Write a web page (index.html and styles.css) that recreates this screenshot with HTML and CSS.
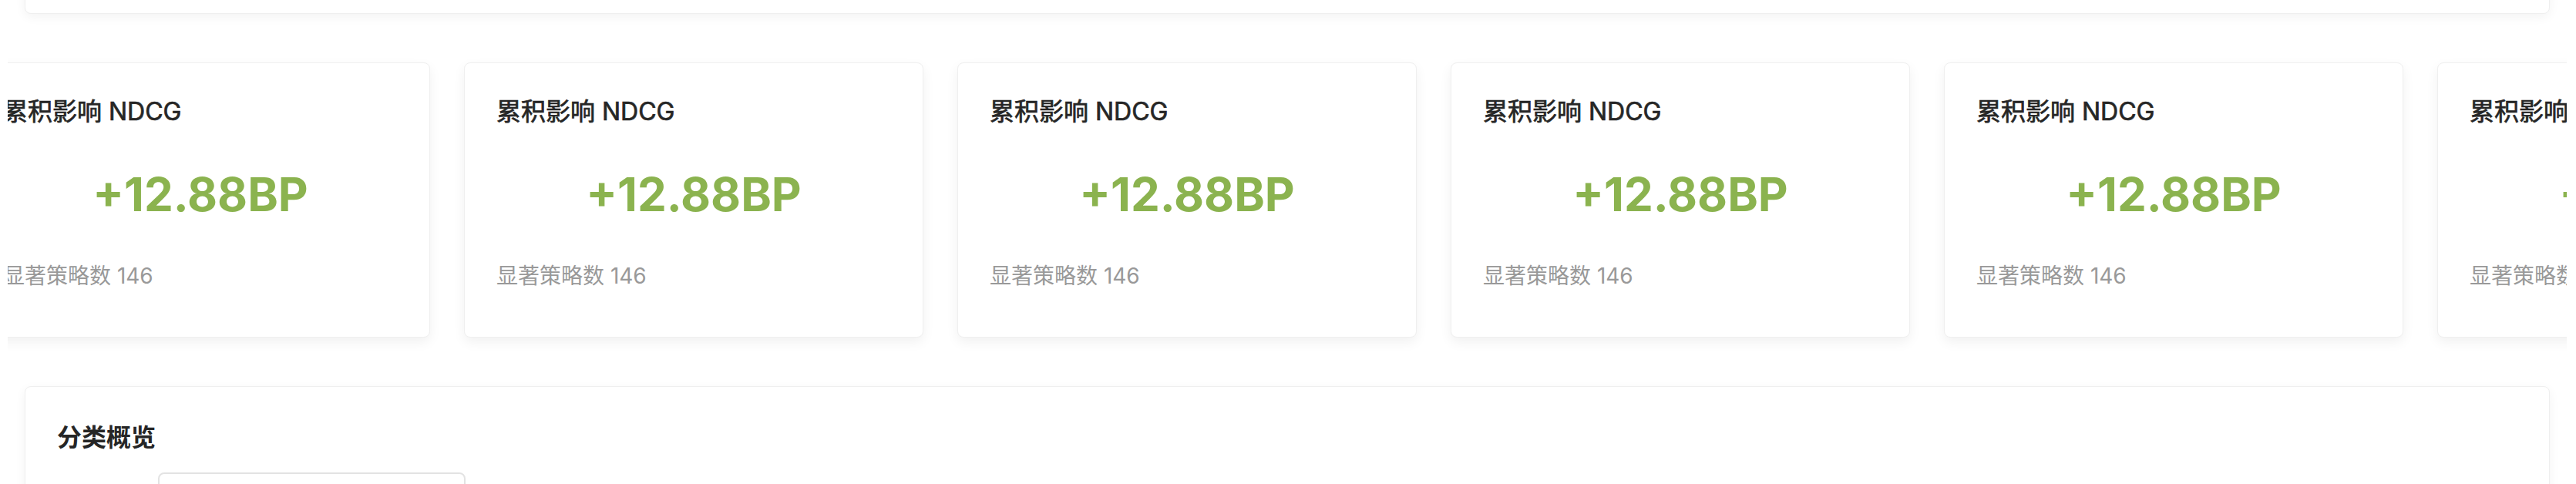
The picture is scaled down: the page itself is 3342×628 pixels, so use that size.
FILE: index.html
```html
<!DOCTYPE html>
<html lang="zh-CN">
<head>
<meta charset="utf-8">
<title>概览</title>
<link rel="stylesheet" href="styles.css">
</head>
<body>
<div class="page">
  <div class="panel top-panel"></div>

  <div class="scroller">
    <div class="track">
      <div class="metric-card">
        <div class="metric-title">累积影响 NDCG</div>
        <div class="metric-value">+12.88BP</div>
        <div class="metric-sub">显著策略数 146</div>
      </div>
      <div class="metric-card">
        <div class="metric-title">累积影响 NDCG</div>
        <div class="metric-value">+12.88BP</div>
        <div class="metric-sub">显著策略数 146</div>
      </div>
      <div class="metric-card">
        <div class="metric-title">累积影响 NDCG</div>
        <div class="metric-value">+12.88BP</div>
        <div class="metric-sub">显著策略数 146</div>
      </div>
      <div class="metric-card">
        <div class="metric-title">累积影响 NDCG</div>
        <div class="metric-value">+12.88BP</div>
        <div class="metric-sub">显著策略数 146</div>
      </div>
      <div class="metric-card">
        <div class="metric-title">累积影响 NDCG</div>
        <div class="metric-value">+12.88BP</div>
        <div class="metric-sub">显著策略数 146</div>
      </div>
      <div class="metric-card">
        <div class="metric-title">累积影响 NDCG</div>
        <div class="metric-value">+12.88BP</div>
        <div class="metric-sub">显著策略数 146</div>
      </div>
    </div>
  </div>

  <div class="panel overview-panel">
    <h3 class="panel-title">分类概览</h3>
    <div class="select-box"></div>
  </div>
</div>
</body>
</html>
```

FILE: styles.css
```css
html, body {
  margin: 0;
  padding: 0;
  background: #ffffff;
  height: 100%;
  overflow: hidden;
}

body {
  font-family: Inter, "Noto Sans CJK SC", sans-serif;
  color: #262626;
}

.page {
  display: flex;
  flex-direction: column;
}

.panel {
  background: #fff;
  border: 1px solid #efefef;
  border-radius: 8px;
  box-shadow: 0 4px 14px rgba(0, 0, 0, 0.05);
  box-sizing: border-box;
  margin-left: 32px;
  margin-right: 34px;
}

.top-panel {
  height: 60px;
  margin-top: -42px;
}

.scroller {
  margin-left: 10px;
  margin-right: 12px;
  overflow: hidden;
  padding-top: 63px;
  padding-bottom: 24px;
  margin-bottom: 39px;
}

.track {
  display: flex;
  gap: 44px;
  margin-left: -48px;
}

.metric-card {
  flex: 0 0 596px;
  height: 357px;
  box-sizing: border-box;
  background: #fff;
  border: 1px solid #efefef;
  border-radius: 8px;
  box-shadow: 0 6px 16px rgba(0, 0, 0, 0.06);
  padding: 47px 41px 0;
  display: flex;
  flex-direction: column;
}

.metric-title {
  font-size: 32px;
  line-height: 32px;
  font-weight: 400;
  -webkit-text-stroke: 0.7px #262626;
  color: #262626;
  white-space: nowrap;
}

.metric-value {
  margin-top: 63px;
  font-size: 60px;
  line-height: 56px;
  font-weight: 700;
  color: #8bb34f;
  text-align: center;
  white-space: nowrap;
}

.metric-sub {
  margin-top: 64px;
  font-size: 28px;
  line-height: 28px;
  color: #999999;
  white-space: nowrap;
}

.overview-panel {
  padding: 50px 41px 40px;
  min-height: 200px;
}

.panel-title {
  margin: 0;
  font-size: 32px;
  line-height: 32px;
  font-weight: 700;
  color: #262626;
}

.select-box {
  margin-top: 29px;
  margin-left: 131px;
  width: 399px;
  height: 60px;
  box-sizing: border-box;
  border: 2px solid #e3e3e3;
  border-radius: 8px;
}
```
